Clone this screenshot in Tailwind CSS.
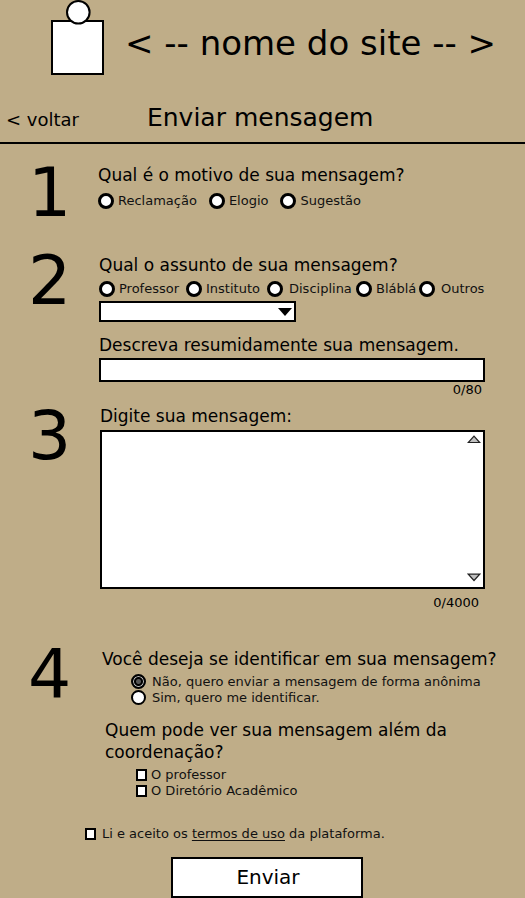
<!DOCTYPE html>
<html lang="pt-BR">
<head>
<meta charset="utf-8">
<meta name="viewport" content="width=device-width, initial-scale=1">
<title>Enviar mensagem</title>
<script src="https://cdn.jsdelivr.net/npm/@tailwindcss/browser@4"></script>
</head>
<body class="bg-[#bfad88] font-['DejaVu_Sans',sans-serif] text-black">
<header class="border-b-2 border-black">
  <div class="flex items-start pl-[51px]">
    <svg class="shrink-0" width="54" height="76" viewBox="0 0 54 76" role="img" aria-label="Logo" fill="#fff" stroke="#000" stroke-width="2">
      <rect x="1" y="21" width="51" height="53"/>
      <circle cx="27.3" cy="12.3" r="11.3"/>
    </svg>
    <p class="ml-5 mt-[22px] text-[34px] leading-[42px] whitespace-nowrap">&lt; -- nome do site -- &gt;</p>
  </div>
  <div class="flex items-baseline gap-[68px] pl-[6px] pt-[26px] pb-[6px]">
    <a href="#" class="text-lg leading-8 whitespace-nowrap">&lt; voltar</a>
    <h1 class="text-[25px] leading-8 whitespace-nowrap">Enviar mensagem</h1>
  </div>
</header>
<main>
<form class="pt-[15px] text-[13px] leading-4 text-[#111]">
  <section class="flex pl-7 pr-10 pb-5">
    <span class="w-[70px] shrink-0 text-[68px] leading-[68px] text-black">1</span>
    <fieldset class="grow pt-[5px]">
      <legend class="contents"><span class="block text-[17px] leading-[22px] text-black">Qual é o motivo de sua mensagem?</span></legend>
      <div class="mt-[7px] flex gap-3">
        <label class="flex gap-1"><input type="radio" name="motivo" class="size-4 appearance-none rounded-full border-3 border-black bg-white">Reclamação</label>
        <label class="flex gap-1"><input type="radio" name="motivo" class="size-4 appearance-none rounded-full border-3 border-black bg-white">Elogio</label>
        <label class="flex gap-1"><input type="radio" name="motivo" class="size-4 appearance-none rounded-full border-3 border-black bg-white">Sugestão</label>
      </div>
    </fieldset>
  </section>

  <section class="flex pl-7 pr-10 pb-1">
    <span class="w-[71px] shrink-0 text-[68px] leading-[68px] text-black">2</span>
    <div class="grow pt-[7px]">
      <fieldset>
        <legend class="contents"><span class="block text-[17px] leading-[22px] text-black">Qual o assunto de sua mensagem?</span></legend>
        <div class="mt-[5px] grid grid-cols-[87fr_81fr_89fr_63fr_66fr] whitespace-nowrap">
          <label class="flex min-w-0 gap-1"><input type="radio" name="assunto" class="size-4 shrink-0 appearance-none rounded-full border-3 border-black bg-white">Professor</label>
          <label class="flex min-w-0 gap-1"><input type="radio" name="assunto" class="size-4 shrink-0 appearance-none rounded-full border-3 border-black bg-white">Instituto</label>
          <label class="flex min-w-0 gap-[6px]"><input type="radio" name="assunto" class="size-4 shrink-0 appearance-none rounded-full border-3 border-black bg-white">Disciplina</label>
          <label class="flex min-w-0 gap-1"><input type="radio" name="assunto" class="size-4 shrink-0 appearance-none rounded-full border-3 border-black bg-white">Bláblá</label>
          <label class="flex min-w-0 gap-[6px]"><input type="radio" name="assunto" class="size-4 shrink-0 appearance-none rounded-full border-3 border-black bg-white">Outros</label>
        </div>
      </fieldset>
      <div class="relative mt-1 w-[51%]">
        <select aria-label="Assunto" class="block h-[21px] w-full appearance-none border-2 border-black bg-white"><option></option></select>
        <svg class="pointer-events-none absolute right-[4px] top-[7px]" width="14" height="9" viewBox="0 0 14 9"><path d="M0 0H14L7 8Z"/></svg>
      </div>
      <label for="resumo" class="mt-[12px] block text-[17px] leading-[22px] text-black">Descreva resumidamente sua mensagem.</label>
      <input id="resumo" type="text" maxlength="80" class="mt-[2px] block h-6 w-full border-2 border-black bg-white px-1">
      <p class="pr-[3px] text-right text-black">0/80</p>
    </div>
  </section>

  <section class="flex pl-7 pr-10 pb-[30px]">
    <span class="w-[72px] shrink-0 text-[68px] leading-[68px] text-black">3</span>
    <div class="grow pt-[3px]">
      <label for="mensagem" class="block text-[17px] leading-[22px] text-black">Digite sua mensagem:</label>
      <div class="relative mt-[3px]">
        <textarea id="mensagem" maxlength="4000" class="block h-[159px] w-full resize-none border-2 border-black bg-white py-1 pl-1 pr-6"></textarea>
        <svg class="absolute right-1 top-[5px]" width="14" height="9" viewBox="0 0 14 9" fill="#c0c0c0" stroke="#222" stroke-width="1.2"><path d="M1.3 7.5H12.7L7 1.2Z"/></svg>
        <svg class="absolute right-1 bottom-[7px]" width="14" height="9" viewBox="0 0 14 9" fill="#c0c0c0" stroke="#222" stroke-width="1.2"><path d="M1.3 1.2H12.7L7 7.5Z"/></svg>
      </div>
      <p class="mt-[6px] pr-[6px] text-right text-black">0/4000</p>
    </div>
  </section>

  <section class="flex pl-7 pr-6">
    <span class="w-[74px] shrink-0 text-[68px] leading-[68px] text-black">4</span>
    <div class="grow pt-[7px]">
      <fieldset>
        <legend class="contents"><span class="block text-[17px] leading-[22px] whitespace-nowrap text-black">Você deseja se identificar em sua mensagem?</span></legend>
        <div class="mt-1 pl-[29px] whitespace-nowrap">
          <label class="flex gap-[6px]"><input type="radio" name="identificar" checked class="size-[15px] shrink-0 appearance-none rounded-full border-2 border-black bg-white checked:bg-[radial-gradient(circle,#555_0_2px,#000_3px_4px,#bbb_5px_5px,#000_6px)]">Não, quero enviar a mensagem de forma anônima</label>
          <label class="flex gap-[6px]"><input type="radio" name="identificar" class="size-[15px] shrink-0 appearance-none rounded-full border-2 border-black bg-white">Sim, quero me identificar.</label>
        </div>
      </fieldset>
      <fieldset class="mt-[13px] pl-[3px]">
        <legend class="contents"><span class="block pr-10 text-[17px] leading-[22px] text-black">Quem pode ver sua mensagem além da coordenação?</span></legend>
        <div class="mt-1 pl-[31px]">
          <label class="flex items-center gap-1"><input type="checkbox" class="h-3 w-[11px] shrink-0 appearance-none border-2 border-black bg-white">O professor</label>
          <label class="flex items-center gap-1"><input type="checkbox" class="h-3 w-[11px] shrink-0 appearance-none border-2 border-black bg-white">O Diretório Acadêmico</label>
        </div>
      </fieldset>
    </div>
  </section>

  <div class="mt-[27px] flex items-center gap-[6px] pl-[85px]">
    <input id="termos" type="checkbox" class="h-3 w-[11px] shrink-0 appearance-none border-2 border-black bg-white">
    <label for="termos">Li e aceito os <a href="#" class="underline underline-offset-2">termos de uso</a> da plataforma.</label>
  </div>
  <div class="mt-[15px] flex justify-center pl-[9px]">
    <button type="submit" class="h-[41px] w-48 border-2 border-black bg-white pb-[2px] pl-[2px] text-xl text-black">Enviar</button>
  </div>
</form>
</main>
</body>
</html>
